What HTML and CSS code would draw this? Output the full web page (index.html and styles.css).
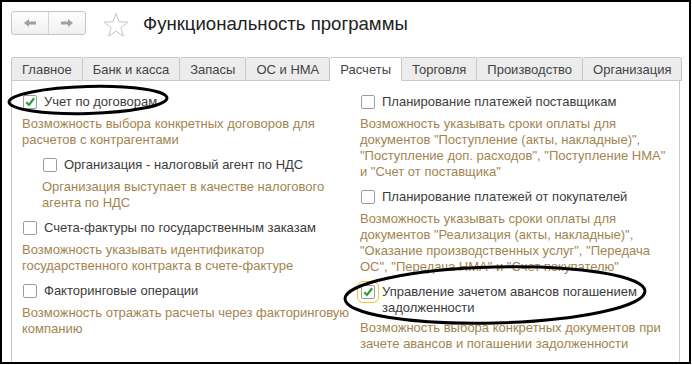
FILE: index.html
```html
<!DOCTYPE html>
<html lang="ru">
<head>
    <meta charset="UTF-8">
    <title>Функциональность программы</title>
    <link rel="stylesheet" href="styles.css">
</head>
<body>
    <div class="window">
        <!-- шапка формы -->
        <div class="header">
            <div class="nav">
                <button class="nav-btn nav-back">
                    <svg width="12" height="8" viewBox="0 0 12 8"><path d="M0 4 L5 0 L5 2.5 L12 2.5 L12 5.5 L5 5.5 L5 8 Z" fill="#a0a0a0"/></svg>
                </button>
                <button class="nav-btn">
                    <svg width="12" height="8" viewBox="0 0 12 8"><path d="M12 4 L7 0 L7 2.5 L0 2.5 L0 5.5 L7 5.5 L7 8 Z" fill="#a0a0a0"/></svg>
                </button>
            </div>
            <svg class="star" width="26" height="25" viewBox="0 0 26 25">
                <polygon points="13,0.5 16.06,8.79 24.89,9.14 17.95,14.61 20.35,23.11 13,18.2 5.65,23.11 8.05,14.61 1.11,9.14 9.94,8.79" fill="none" stroke="#c4c4c4" stroke-width="1"/>
            </svg>
            <h1 class="title">Функциональность программы</h1>
        </div>

        <!-- закладки -->
        <div class="tabs">
            <div class="tab">Главное</div>
            <div class="tab">Банк и касса</div>
            <div class="tab">Запасы</div>
            <div class="tab">ОС и НМА</div>
            <div class="tab active">Расчеты</div>
            <div class="tab">Торговля</div>
            <div class="tab">Производство</div>
            <div class="tab">Организация</div>
        </div>

        <div class="panel">
            <div class="col">
                <div class="option">
                    <div class="check">
                        <span class="box"><svg width="14" height="14" viewBox="0 0 14 14"><path d="M2.6 7.2 L5.8 10.4 L11.8 2.6" fill="none" stroke="#2e9e3e" stroke-width="2.6"/></svg></span>
                        <span class="label">Учет по договорам</span>
                    </div>
                    <div class="hint">Возможность выбора конкретных договоров для расчетов с контрагентами</div>
                </div>
                <div class="option nested">
                    <div class="check">
                        <span class="box"></span>
                        <span class="label">Организация - налоговый агент по НДС</span>
                    </div>
                    <div class="hint">Организация выступает в качестве налогового агента по НДС</div>
                </div>
                <div class="option">
                    <div class="check">
                        <span class="box"></span>
                        <span class="label">Счета-фактуры по государственным заказам</span>
                    </div>
                    <div class="hint">Возможность указывать идентификатор государственного контракта в счете-фактуре</div>
                </div>
                <div class="option">
                    <div class="check">
                        <span class="box"></span>
                        <span class="label">Факторинговые операции</span>
                    </div>
                    <div class="hint">Возможность отражать расчеты через факторинговую компанию</div>
                </div>
            </div>

            <div class="col">
                <div class="option">
                    <div class="check">
                        <span class="box"></span>
                        <span class="label">Планирование платежей поставщикам</span>
                    </div>
                    <div class="hint">Возможность указывать сроки оплаты для документов "Поступление (акты, накладные)", "Поступление доп. расходов", "Поступление НМА" и "Счет от поставщика"</div>
                </div>
                <div class="option">
                    <div class="check">
                        <span class="box"></span>
                        <span class="label">Планирование платежей от покупателей</span>
                    </div>
                    <div class="hint">Возможность указывать сроки оплаты для документов "Реализация (акты, накладные)", "Оказание производственных услуг", "Передача ОС", "Передача НМА" и "Счет покупателю"</div>
                </div>
                <div class="option">
                    <div class="check">
                        <span class="box focused"><svg width="14" height="14" viewBox="0 0 14 14"><path d="M2.6 7.2 L5.8 10.4 L11.8 2.6" fill="none" stroke="#2e9e3e" stroke-width="2.6"/></svg></span>
                        <span class="label">Управление зачетом авансов погашением задолженности</span>
                    </div>
                    <div class="hint">Возможность выбора конкретных документов при зачете авансов и погашении задолженности</div>
                </div>
            </div>
        </div>
    </div>

    <!-- пометки поверх скриншота -->
    <svg class="marks" width="692" height="365" viewBox="0 0 692 365">
        <ellipse cx="88" cy="100" rx="79" ry="13.5" transform="rotate(-1.5 88 100)" fill="none" stroke="#000" stroke-width="3"/>
        <ellipse cx="495" cy="295" rx="150" ry="28" transform="rotate(-1.5 495 295)" fill="none" stroke="#000" stroke-width="3"/>
    </svg>
</body>
</html>
```

FILE: styles.css
```css
body {
    margin: 0;
    background-color: #fff;
    font-family: "Liberation Sans", Arial, sans-serif;
    font-size: 13px;
    color: #3c3c3c;
    position: relative;
    width: 692px;
    height: 365px;
    overflow: hidden;
}
.window {
    box-sizing: border-box;
    width: 691px;
    height: 364px;
    border: 2px solid #000;
    display: flex;
    flex-direction: column;
}
.header {
    box-sizing: border-box;
    height: 55px;
    padding: 9px 9px 0;
    display: flex;
    align-items: flex-start;
}
.nav {
    display: flex;
    height: 24px;
    border: 1px solid #c6c6c6;
    border-radius: 3px;
    box-sizing: border-box;
    background: linear-gradient(#fefefe, #f0f0f0);
}
.nav-btn {
    width: 36px;
    height: 22px;
    padding: 0;
    border: none;
    background: none;
    display: flex;
    align-items: center;
    justify-content: center;
}
.nav-back {
    width: 37px;
    border-right: 1px solid #d4d4d4;
}
.star {
    margin: 2px 0 0 17px;
}
.title {
    margin: 0 0 0 14px;
    font-size: 18.6px;
    font-weight: normal;
    line-height: 25px;
    color: #222;
}
.tabs {
    display: flex;
    margin: 0 9px -1px;
    position: relative;
    z-index: 1;
}
.tab {
    flex: 1 0 auto;
    box-sizing: border-box;
    height: 24px;
    line-height: 23px;
    padding: 0 10px;
    white-space: nowrap;
    text-align: center;
    background-color: #ececec;
    border: 1px solid #c8c8c8;
    border-left: none;
    border-radius: 2px 2px 0 0;
    color: #444;
}
.tab:first-child {
    border-left: 1px solid #c8c8c8;
}
.tab.active {
    background-color: #fff;
    border-bottom-color: #fff;
}
.panel {
    flex: 1;
    margin: 0 9px;
    border: 1px solid #c8c8c8;
    border-bottom: none;
    padding: 11px 9px 0 10px;
    display: grid;
    grid-template-columns: 328px 1fr;
    column-gap: 10px;
    align-items: start;
}
.option {
    margin-bottom: 7px;
}
.option.nested {
    padding-left: 20px;
}
.check {
    display: flex;
    align-items: flex-start;
    min-height: 20px;
}
.box {
    box-sizing: border-box;
    width: 14px;
    height: 14px;
    margin: 3px 7px 0 1px;
    flex-shrink: 0;
    border: 1px solid #9c9c9c;
    border-radius: 2px;
    background-color: #fff;
    display: flex;
    align-items: center;
    justify-content: center;
}
.box svg {
    margin-top: -1px;
}
.box.focused {
    outline: 1px solid #f1c232;
    outline-offset: 3px;
}
.label {
    padding-top: 2px;
    line-height: 16px;
    color: #3c3c3c;
}
.hint {
    margin-top: 4px;
    line-height: 16px;
    color: #a3844f;
}
.marks {
    position: absolute;
    top: 0;
    left: 0;
    pointer-events: none;
}
```
